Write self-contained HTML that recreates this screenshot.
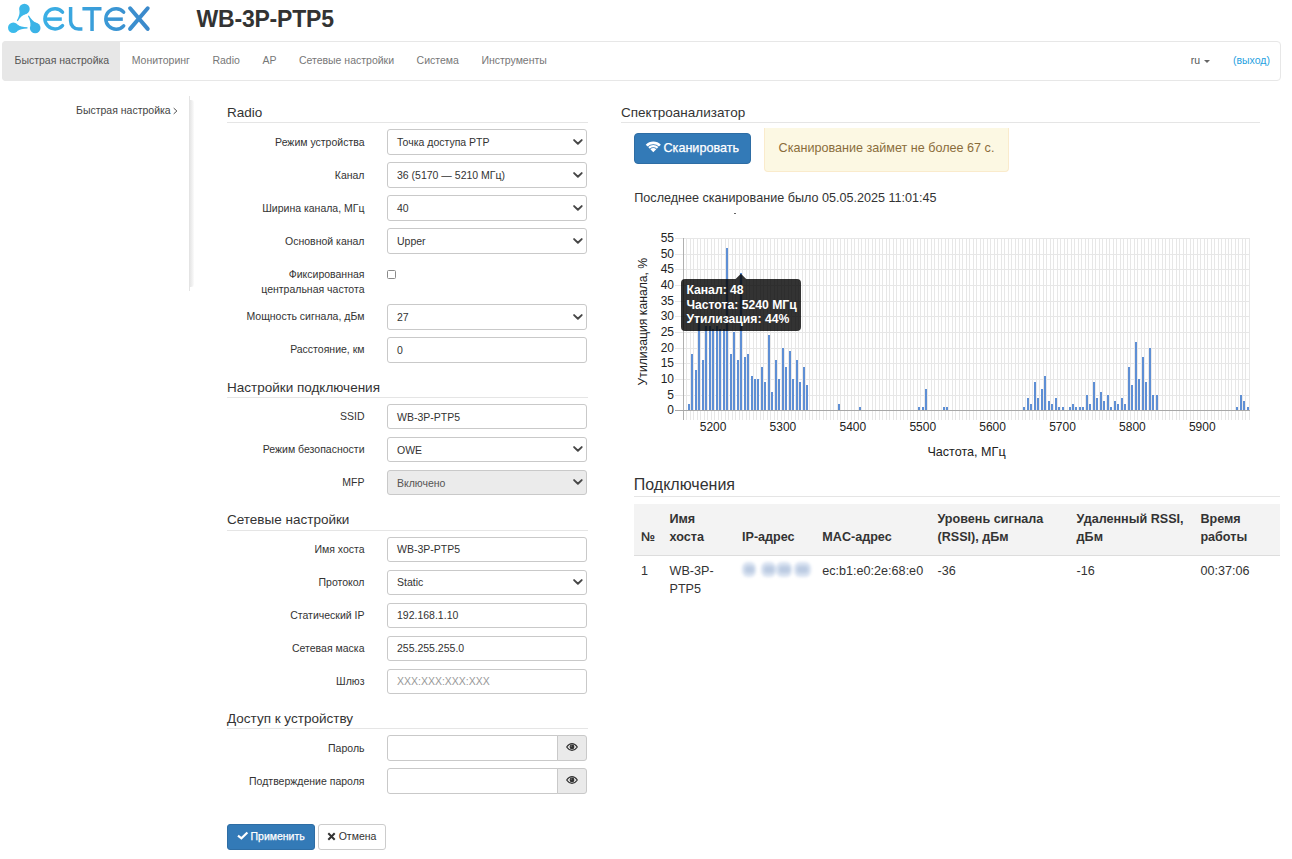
<!DOCTYPE html>
<html><head><meta charset="utf-8"><title>WB-3P-PTP5</title>
<style>
html,body{margin:0;padding:0;background:#fff;width:1292px;height:859px;overflow:hidden}
body{position:relative;font-family:"Liberation Sans",sans-serif;color:#333}
.abs{position:absolute}
.t{position:absolute;white-space:nowrap}
svg text{font-family:"Liberation Sans",sans-serif}
</style></head><body>
<svg class="abs" style="left:0;top:0" width="160" height="40" viewBox="0 0 160 40">
<defs><linearGradient id="lg" x1="8" y1="0" x2="150" y2="0" gradientUnits="userSpaceOnUse">
<stop offset="0" stop-color="#3cbcec"/><stop offset="0.45" stop-color="#3aa6df"/><stop offset="1" stop-color="#3b88ca"/></linearGradient></defs>
<g fill="url(#lg)">
<circle cx="24.4" cy="9.1" r="5.3"/><circle cx="13.3" cy="27.7" r="5.3"/><circle cx="35.2" cy="27.9" r="5.3"/>
<path d="M19.45 11.00Q20.07 14.84 16.83 20.62L17.77 21.18Q21.35 15.62 25.04 14.36Z"/>
<path d="M17.43 31.02Q20.44 28.55 27.49 28.45L27.51 27.35Q20.46 27.05 17.52 24.50Z"/>
<path d="M36.00 22.66Q32.35 21.30 28.88 15.53L27.92 16.07Q31.04 22.03 30.31 25.86Z"/>
</g>
<g fill="none" stroke="url(#lg)" stroke-width="3.5">
<path d="M45 19.1H61.8"/>
<path d="M70.6 7V21 A8 8 0 0 0 78.6 29.1H82.4"/>
<path d="M82.4 8.65H101.5M92.05 7V30.9"/>
<path d="M106.2 19.15H122.8"/>
</g>
<g fill="none" stroke="url(#lg)" stroke-width="3.5" stroke-linecap="round">
<path d="M62.5 12.09 A10.1 10.1 0 1 0 62.5 25.61"/>
<path d="M123.67 12.09 A10.25 10.25 0 1 0 123.67 25.81"/>
</g>
<g fill="none" stroke="url(#lg)" stroke-width="4" stroke-linecap="round">
<path d="M130.1 8.3L147.7 28.9M147.7 8.3L130.1 28.9"/>
</g>
</svg>
<div class="t" style="top:6px;font-size:23px;line-height:26px;color:#333;font-weight:bold;left:196.5px;letter-spacing:-0.2px">WB-3P-PTP5</div>
<div class="abs" style="left:2px;top:41px;width:1277px;height:38px;border:1px solid #e7e7e7;border-radius:4px;background:#fff"></div>
<div class="abs" style="left:2px;top:41px;width:118px;height:40px;background:#e7e7e7;border-radius:4px 0 0 4px"></div>
<div class="t" style="top:54px;font-size:10.5px;line-height:12px;color:#555;left:14.5px;">Быстрая настройка</div>
<div class="t" style="top:54px;font-size:10.5px;line-height:12px;color:#777;left:131.72px;">Мониторинг</div>
<div class="t" style="top:54px;font-size:10.5px;line-height:12px;color:#777;left:212.45px;">Radio</div>
<div class="t" style="top:54px;font-size:10.5px;line-height:12px;color:#777;left:262.39px;">AP</div>
<div class="t" style="top:54px;font-size:10.5px;line-height:12px;color:#777;left:298.89px;">Сетевые настройки</div>
<div class="t" style="top:54px;font-size:10.5px;line-height:12px;color:#777;left:416.59px;">Система</div>
<div class="t" style="top:54px;font-size:10.5px;line-height:12px;color:#777;left:481.38px;">Инструменты</div>
<div class="t" style="top:54px;font-size:10.5px;line-height:12px;color:#555;left:1190.7px;">ru</div>
<div class="abs" style="left:1203.8px;top:59.8px;width:0;height:0;border-left:3px solid transparent;border-right:3px solid transparent;border-top:3px solid #666"></div>
<div class="t" style="top:54px;font-size:10.5px;line-height:12px;color:#1fa2df;left:1232.9px;">(выход)</div>
<div class="t" style="top:104px;font-size:10.5px;line-height:12px;color:#444;left:76px;">Быстрая настройка</div>
<svg class="abs" style="left:172px;top:106px" width="8" height="10"><path d="M1.7 2.1L4.9 5L1.7 7.9" fill="none" stroke="#4a4a4a" stroke-width="0.95"/></svg>
<div class="abs" style="left:189px;top:96px;width:1px;height:195px;background:#e4e4e4"></div>
<div class="abs" style="left:190px;top:100px;width:4px;height:187px;border-radius:0 3px 3px 0;background:linear-gradient(90deg,#e6e6e6,#efefef 45%,#fbfbfb)"></div>
<div class="t" style="top:105px;font-size:13.5px;line-height:15px;color:#333;left:227px;">Radio</div>
<div class="abs" style="left:227px;top:122px;width:361px;height:1px;background:#e5e5e5"></div>
<div class="t" style="top:136px;font-size:10.5px;line-height:12px;color:#333;right:927.5px;text-align:right;">Режим устройства</div>
<div class="abs" style="left:387px;top:129px;width:198px;height:24px;border:1px solid #c9c9c9;border-radius:3px;background:#fff"></div>
<div class="t" style="top:136px;font-size:10.5px;line-height:12px;color:#333;left:397px;">Точка доступа PTP</div>
<svg class="abs" style="left:572px;top:138.5px" width="12" height="8"><path d="M2.1 1.1L5.9 4.8L9.7 1.1" fill="none" stroke="#474747" stroke-width="1.9" stroke-linecap="round" stroke-linejoin="round"/></svg>
<div class="t" style="top:169px;font-size:10.5px;line-height:12px;color:#333;right:927.5px;text-align:right;">Канал</div>
<div class="abs" style="left:387px;top:162px;width:198px;height:24px;border:1px solid #c9c9c9;border-radius:3px;background:#fff"></div>
<div class="t" style="top:169px;font-size:10.5px;line-height:12px;color:#333;left:397px;">36 (5170 — 5210 МГц)</div>
<svg class="abs" style="left:572px;top:171.5px" width="12" height="8"><path d="M2.1 1.1L5.9 4.8L9.7 1.1" fill="none" stroke="#474747" stroke-width="1.9" stroke-linecap="round" stroke-linejoin="round"/></svg>
<div class="t" style="top:202px;font-size:10.5px;line-height:12px;color:#333;right:927.5px;text-align:right;">Ширина канала, МГц</div>
<div class="abs" style="left:387px;top:195px;width:198px;height:24px;border:1px solid #c9c9c9;border-radius:3px;background:#fff"></div>
<div class="t" style="top:202px;font-size:10.5px;line-height:12px;color:#333;left:397px;">40</div>
<svg class="abs" style="left:572px;top:204.5px" width="12" height="8"><path d="M2.1 1.1L5.9 4.8L9.7 1.1" fill="none" stroke="#474747" stroke-width="1.9" stroke-linecap="round" stroke-linejoin="round"/></svg>
<div class="t" style="top:235px;font-size:10.5px;line-height:12px;color:#333;right:927.5px;text-align:right;">Основной канал</div>
<div class="abs" style="left:387px;top:228px;width:198px;height:24px;border:1px solid #c9c9c9;border-radius:3px;background:#fff"></div>
<div class="t" style="top:235px;font-size:10.5px;line-height:12px;color:#333;left:397px;">Upper</div>
<svg class="abs" style="left:572px;top:237.5px" width="12" height="8"><path d="M2.1 1.1L5.9 4.8L9.7 1.1" fill="none" stroke="#474747" stroke-width="1.9" stroke-linecap="round" stroke-linejoin="round"/></svg>
<div class="t" style="top:268px;font-size:10.5px;line-height:12px;color:#333;right:927.5px;text-align:right;">Фиксированная</div>
<div class="t" style="top:283px;font-size:10.5px;line-height:12px;color:#333;right:927.5px;text-align:right;">центральная частота</div>
<div class="abs" style="left:387px;top:270px;width:7px;height:7px;border:1px solid #8a8a8a;border-radius:1.5px;background:#fff"></div>
<div class="t" style="top:310px;font-size:10.5px;line-height:12px;color:#333;right:927.5px;text-align:right;">Мощность сигнала, дБм</div>
<div class="abs" style="left:387px;top:304px;width:198px;height:24px;border:1px solid #c9c9c9;border-radius:3px;background:#fff"></div>
<div class="t" style="top:311px;font-size:10.5px;line-height:12px;color:#333;left:397px;">27</div>
<svg class="abs" style="left:572px;top:313.5px" width="12" height="8"><path d="M2.1 1.1L5.9 4.8L9.7 1.1" fill="none" stroke="#474747" stroke-width="1.9" stroke-linecap="round" stroke-linejoin="round"/></svg>
<div class="t" style="top:343px;font-size:10.5px;line-height:12px;color:#333;right:927.5px;text-align:right;">Расстояние, км</div>
<div class="abs" style="left:387px;top:337px;width:198px;height:24px;border:1px solid #c9c9c9;border-radius:3px;background:#fff"></div>
<div class="t" style="top:344px;font-size:10.5px;line-height:12px;color:#333;left:397px;">0</div>
<div class="t" style="top:380px;font-size:13.5px;line-height:15px;color:#333;left:227px;">Настройки подключения</div>
<div class="abs" style="left:227px;top:397px;width:361px;height:1px;background:#e5e5e5"></div>
<div class="t" style="top:410px;font-size:10.5px;line-height:12px;color:#333;right:927.5px;text-align:right;">SSID</div>
<div class="abs" style="left:387px;top:404px;width:198px;height:23px;border:1px solid #c9c9c9;border-radius:3px;background:#fff"></div>
<div class="t" style="top:411px;font-size:10.5px;line-height:12px;color:#333;left:397px;">WB-3P-PTP5</div>
<div class="t" style="top:443px;font-size:10.5px;line-height:12px;color:#333;right:927.5px;text-align:right;">Режим безопасности</div>
<div class="abs" style="left:387px;top:437px;width:198px;height:23px;border:1px solid #c9c9c9;border-radius:3px;background:#fff"></div>
<div class="t" style="top:444px;font-size:10.5px;line-height:12px;color:#333;left:397px;">OWE</div>
<svg class="abs" style="left:572px;top:446.0px" width="12" height="8"><path d="M2.1 1.1L5.9 4.8L9.7 1.1" fill="none" stroke="#474747" stroke-width="1.9" stroke-linecap="round" stroke-linejoin="round"/></svg>
<div class="t" style="top:476px;font-size:10.5px;line-height:12px;color:#333;right:927.5px;text-align:right;">MFP</div>
<div class="abs" style="left:387px;top:470px;width:198px;height:23px;border:1px solid #c9c9c9;border-radius:3px;background:#ebebeb"></div>
<div class="t" style="top:477px;font-size:10.5px;line-height:12px;color:#555;left:397px;">Включено</div>
<svg class="abs" style="left:572px;top:479.0px" width="12" height="8"><path d="M2.1 1.1L5.9 4.8L9.7 1.1" fill="none" stroke="#474747" stroke-width="1.9" stroke-linecap="round" stroke-linejoin="round"/></svg>
<div class="t" style="top:512px;font-size:13.5px;line-height:15px;color:#333;left:227px;">Сетевые настройки</div>
<div class="abs" style="left:227px;top:530px;width:361px;height:1px;background:#e5e5e5"></div>
<div class="t" style="top:543px;font-size:10.5px;line-height:12px;color:#333;right:927.5px;text-align:right;">Имя хоста</div>
<div class="abs" style="left:387px;top:537px;width:198px;height:23px;border:1px solid #c9c9c9;border-radius:3px;background:#fff"></div>
<div class="t" style="top:543px;font-size:10.5px;line-height:12px;color:#333;left:397px;">WB-3P-PTP5</div>
<div class="t" style="top:576px;font-size:10.5px;line-height:12px;color:#333;right:927.5px;text-align:right;">Протокол</div>
<div class="abs" style="left:387px;top:570px;width:198px;height:23px;border:1px solid #c9c9c9;border-radius:3px;background:#fff"></div>
<div class="t" style="top:576px;font-size:10.5px;line-height:12px;color:#333;left:397px;">Static</div>
<svg class="abs" style="left:572px;top:579.0px" width="12" height="8"><path d="M2.1 1.1L5.9 4.8L9.7 1.1" fill="none" stroke="#474747" stroke-width="1.9" stroke-linecap="round" stroke-linejoin="round"/></svg>
<div class="t" style="top:609px;font-size:10.5px;line-height:12px;color:#333;right:927.5px;text-align:right;">Статический IP</div>
<div class="abs" style="left:387px;top:603px;width:198px;height:23px;border:1px solid #c9c9c9;border-radius:3px;background:#fff"></div>
<div class="t" style="top:609px;font-size:10.5px;line-height:12px;color:#333;left:397px;">192.168.1.10</div>
<div class="t" style="top:642px;font-size:10.5px;line-height:12px;color:#333;right:927.5px;text-align:right;">Сетевая маска</div>
<div class="abs" style="left:387px;top:636px;width:198px;height:23px;border:1px solid #c9c9c9;border-radius:3px;background:#fff"></div>
<div class="t" style="top:642px;font-size:10.5px;line-height:12px;color:#333;left:397px;">255.255.255.0</div>
<div class="t" style="top:675px;font-size:10.5px;line-height:12px;color:#333;right:927.5px;text-align:right;">Шлюз</div>
<div class="abs" style="left:387px;top:669px;width:198px;height:23px;border:1px solid #c9c9c9;border-radius:3px;background:#fff"></div>
<div class="t" style="top:675px;font-size:10.5px;line-height:12px;color:#999;left:397px;">XXX:XXX:XXX:XXX</div>
<div class="t" style="top:711px;font-size:13.5px;line-height:15px;color:#333;left:227px;">Доступ к устройству</div>
<div class="abs" style="left:227px;top:728px;width:361px;height:1px;background:#e5e5e5"></div>
<div class="t" style="top:742px;font-size:10.5px;line-height:12px;color:#333;right:927.5px;text-align:right;">Пароль</div>
<div class="abs" style="left:387px;top:735px;width:169px;height:24px;border:1px solid #c9c9c9;border-radius:3px 0 0 3px;background:#fff"></div>
<div class="abs" style="left:557px;top:735px;width:28px;height:24px;border:1px solid #c9c9c9;border-radius:0 3px 3px 0;background:#eaeaea"></div>
<svg class="abs" style="left:566px;top:743.2px" width="12" height="8" viewBox="0 0 12 8"><path d="M0.7 4C2.4 1.5 4.1 0.7 6 0.7S9.6 1.5 11.3 4C9.6 6.5 7.9 7.3 6 7.3S2.4 6.5 0.7 4Z" fill="none" stroke="#333" stroke-width="1.2"/><circle cx="6" cy="3.9" r="2.4" fill="#333"/><circle cx="5.2" cy="3.1" r="0.7" fill="#888"/></svg>
<div class="t" style="top:775px;font-size:10.5px;line-height:12px;color:#333;right:927.5px;text-align:right;">Подтверждение пароля</div>
<div class="abs" style="left:387px;top:768px;width:169px;height:24px;border:1px solid #c9c9c9;border-radius:3px 0 0 3px;background:#fff"></div>
<div class="abs" style="left:557px;top:768px;width:28px;height:24px;border:1px solid #c9c9c9;border-radius:0 3px 3px 0;background:#eaeaea"></div>
<svg class="abs" style="left:566px;top:776.2px" width="12" height="8" viewBox="0 0 12 8"><path d="M0.7 4C2.4 1.5 4.1 0.7 6 0.7S9.6 1.5 11.3 4C9.6 6.5 7.9 7.3 6 7.3S2.4 6.5 0.7 4Z" fill="none" stroke="#333" stroke-width="1.2"/><circle cx="6" cy="3.9" r="2.4" fill="#333"/><circle cx="5.2" cy="3.1" r="0.7" fill="#888"/></svg>
<div class="abs" style="left:227px;top:824px;width:86px;height:24px;border:1px solid #2e6da4;border-radius:3px;background:#337ab7"></div>
<svg class="abs" style="left:237px;top:831px" width="12" height="10" viewBox="0 0 12 10"><path d="M1 4.6L4.4 7.3L10.4 1.5" fill="none" stroke="#fff" stroke-width="2.2"/></svg>
<div class="t" style="top:830px;font-size:10.5px;line-height:12px;color:#fff;left:250.5px;-webkit-text-stroke:0.25px #fff">Применить</div>
<div class="abs" style="left:318px;top:824px;width:66px;height:24px;border:1px solid #ccc;border-radius:3px;background:#fff"></div>
<svg class="abs" style="left:327px;top:832px" width="9" height="9" viewBox="0 0 9 9"><path d="M1.3 1.3L7.7 7.7M7.7 1.3L1.3 7.7" fill="none" stroke="#333" stroke-width="2"/></svg>
<div class="t" style="top:830px;font-size:10.5px;line-height:12px;color:#333;left:338.7px;">Отмена</div>
<div class="t" style="top:105px;font-size:13.5px;line-height:15px;color:#333;left:621px;">Спектроанализатор</div>
<div class="abs" style="left:621px;top:122px;width:639px;height:1px;background:#e5e5e5"></div>
<div class="abs" style="left:634px;top:133px;width:115px;height:29px;border:1px solid #2e6da4;border-radius:4px;background:#337ab7"></div>
<svg class="abs" style="left:644px;top:139px" width="19" height="15" viewBox="0 0 19 15"><path d="M1.73 5.63A10.7 10.7 0 0 1 16.87 5.63L14.96 7.54A8.0 8.0 0 0 0 3.64 7.54ZM4.21 8.11A7.2 7.2 0 0 1 14.39 8.11L12.84 9.66A5.0 5.0 0 0 0 5.76 9.66ZM6.33 10.23A4.2 4.2 0 0 1 12.27 10.23L9.30 13.20Z" fill="#fff"/></svg>
<div class="t" style="top:141px;font-size:12.6px;line-height:14px;color:#fff;left:663.5px;-webkit-text-stroke:0.25px #fff">Сканировать</div>
<div class="abs" style="left:764px;top:128px;width:243px;height:43px;border:1px solid #faebcc;border-top:none;border-radius:0 0 4px 4px;background:#fcf8e3"></div>
<div class="t" style="top:141px;font-size:12.6px;line-height:14px;color:#8a6d3b;left:778.6px;">Сканирование займет не более 67 с.</div>
<div class="t" style="top:191px;font-size:12.6px;line-height:14px;color:#333;left:634.3px;">Последнее сканирование было 05.05.2025 11:01:45</div>
<div class="abs" style="left:734px;top:213px;width:2px;height:1px;background:#666"></div>
<svg width="660" height="250" viewBox="620 220 660 250" style="position:absolute;left:620px;top:220px">
<path d="M686 238h1V420h-1ZM690 238h1V420h-1ZM693 238h1V420h-1ZM697 238h1V420h-1ZM700 238h1V420h-1ZM704 238h1V420h-1ZM707 238h1V420h-1ZM711 238h1V420h-1ZM714 238h1V420h-1ZM718 238h1V420h-1ZM721 238h1V420h-1ZM725 238h1V420h-1ZM728 238h1V420h-1ZM732 238h1V420h-1ZM735 238h1V420h-1ZM739 238h1V420h-1ZM742 238h1V420h-1ZM746 238h1V420h-1ZM749 238h1V420h-1ZM753 238h1V420h-1ZM756 238h1V420h-1ZM760 238h1V420h-1ZM763 238h1V420h-1ZM767 238h1V420h-1ZM770 238h1V420h-1ZM774 238h1V420h-1ZM777 238h1V420h-1ZM781 238h1V420h-1ZM784 238h1V420h-1ZM788 238h1V420h-1ZM791 238h1V420h-1ZM795 238h1V420h-1ZM798 238h1V420h-1ZM802 238h1V420h-1ZM805 238h1V420h-1ZM809 238h1V420h-1ZM812 238h1V420h-1ZM816 238h1V420h-1ZM819 238h1V420h-1ZM823 238h1V420h-1ZM826 238h1V420h-1ZM830 238h1V420h-1ZM833 238h1V420h-1ZM837 238h1V420h-1ZM840 238h1V420h-1ZM844 238h1V420h-1ZM847 238h1V420h-1ZM851 238h1V420h-1ZM854 238h1V420h-1ZM858 238h1V420h-1ZM861 238h1V420h-1ZM865 238h1V420h-1ZM868 238h1V420h-1ZM872 238h1V420h-1ZM875 238h1V420h-1ZM879 238h1V420h-1ZM882 238h1V420h-1ZM886 238h1V420h-1ZM889 238h1V420h-1ZM893 238h1V420h-1ZM896 238h1V420h-1ZM900 238h1V420h-1ZM903 238h1V420h-1ZM907 238h1V420h-1ZM910 238h1V420h-1ZM913 238h1V420h-1ZM917 238h1V420h-1ZM920 238h1V420h-1ZM924 238h1V420h-1ZM927 238h1V420h-1ZM931 238h1V420h-1ZM934 238h1V420h-1ZM938 238h1V420h-1ZM941 238h1V420h-1ZM945 238h1V420h-1ZM948 238h1V420h-1ZM952 238h1V420h-1ZM955 238h1V420h-1ZM959 238h1V420h-1ZM962 238h1V420h-1ZM966 238h1V420h-1ZM969 238h1V420h-1ZM973 238h1V420h-1ZM976 238h1V420h-1ZM980 238h1V420h-1ZM983 238h1V420h-1ZM987 238h1V420h-1ZM990 238h1V420h-1ZM994 238h1V420h-1ZM997 238h1V420h-1ZM1001 238h1V420h-1ZM1004 238h1V420h-1ZM1008 238h1V420h-1ZM1011 238h1V420h-1ZM1015 238h1V420h-1ZM1018 238h1V420h-1ZM1022 238h1V420h-1ZM1025 238h1V420h-1ZM1029 238h1V420h-1ZM1032 238h1V420h-1ZM1036 238h1V420h-1ZM1039 238h1V420h-1ZM1043 238h1V420h-1ZM1046 238h1V420h-1ZM1050 238h1V420h-1ZM1053 238h1V420h-1ZM1057 238h1V420h-1ZM1060 238h1V420h-1ZM1064 238h1V420h-1ZM1067 238h1V420h-1ZM1071 238h1V420h-1ZM1074 238h1V420h-1ZM1078 238h1V420h-1ZM1081 238h1V420h-1ZM1085 238h1V420h-1ZM1088 238h1V420h-1ZM1092 238h1V420h-1ZM1095 238h1V420h-1ZM1099 238h1V420h-1ZM1102 238h1V420h-1ZM1106 238h1V420h-1ZM1109 238h1V420h-1ZM1113 238h1V420h-1ZM1116 238h1V420h-1ZM1120 238h1V420h-1ZM1123 238h1V420h-1ZM1127 238h1V420h-1ZM1130 238h1V420h-1ZM1134 238h1V420h-1ZM1137 238h1V420h-1ZM1141 238h1V420h-1ZM1144 238h1V420h-1ZM1148 238h1V420h-1ZM1151 238h1V420h-1ZM1155 238h1V420h-1ZM1158 238h1V420h-1ZM1162 238h1V420h-1ZM1165 238h1V420h-1ZM1169 238h1V420h-1ZM1172 238h1V420h-1ZM1176 238h1V420h-1ZM1179 238h1V420h-1ZM1183 238h1V420h-1ZM1186 238h1V420h-1ZM1190 238h1V420h-1ZM1193 238h1V420h-1ZM1197 238h1V420h-1ZM1200 238h1V420h-1ZM1204 238h1V420h-1ZM1207 238h1V420h-1ZM1211 238h1V420h-1ZM1214 238h1V420h-1ZM1218 238h1V420h-1ZM1221 238h1V420h-1ZM1225 238h1V420h-1ZM1228 238h1V420h-1ZM1231 238h1V420h-1ZM1235 238h1V420h-1ZM1238 238h1V420h-1ZM1242 238h1V420h-1ZM1245 238h1V420h-1ZM1249 238h1V420h-1Z" fill="#e7e7e7" shape-rendering="crispEdges"/>
<path d="M675 395H1250v1H675ZM675 379H1250v1H675ZM675 363H1250v1H675ZM675 348H1250v1H675ZM675 332H1250v1H675ZM675 316H1250v1H675ZM675 301H1250v1H675ZM675 285H1250v1H675ZM675 269H1250v1H675ZM675 254H1250v1H675ZM675 238H1250v1H675Z" fill="#e7e7e7" shape-rendering="crispEdges"/>
<path d="M683 238h1V420h-1Z" fill="#b0b0b0" shape-rendering="crispEdges"/>
<path d="M688 404h2V410h-2ZM691 354h2V410h-2ZM695 370h2V410h-2ZM698 317h2V410h-2ZM702 360h2V410h-2ZM705 326h2V410h-2ZM709 326h2V410h-2ZM712 329h2V410h-2ZM716 326h2V410h-2ZM719 329h2V410h-2ZM723 329h2V410h-2ZM726 248h2V410h-2ZM730 354h2V410h-2ZM733 332h2V410h-2ZM737 360h2V410h-2ZM740 273h2V410h-2ZM744 357h2V410h-2ZM747 354h2V410h-2ZM751 376h2V410h-2ZM754 379h2V410h-2ZM757 379h2V410h-2ZM761 367h2V410h-2ZM764 382h2V410h-2ZM768 335h2V410h-2ZM771 392h2V410h-2ZM775 360h2V410h-2ZM778 379h2V410h-2ZM782 348h2V410h-2ZM785 367h2V410h-2ZM789 351h2V410h-2ZM792 379h2V410h-2ZM796 360h2V410h-2ZM799 382h2V410h-2ZM803 367h2V410h-2ZM806 385h2V410h-2ZM838 404h2V410h-2ZM859 407h2V410h-2ZM918 407h2V410h-2ZM922 407h2V410h-2ZM925 389h2V410h-2ZM943 407h2V410h-2ZM946 407h2V410h-2ZM1023 407h2V410h-2ZM1027 398h2V410h-2ZM1030 404h2V410h-2ZM1034 382h2V410h-2ZM1037 398h2V410h-2ZM1041 389h2V410h-2ZM1044 376h2V410h-2ZM1048 401h2V410h-2ZM1051 404h2V410h-2ZM1055 398h2V410h-2ZM1058 407h2V410h-2ZM1062 407h2V410h-2ZM1069 407h2V410h-2ZM1072 404h2V410h-2ZM1075 407h2V410h-2ZM1079 407h2V410h-2ZM1082 407h2V410h-2ZM1086 395h2V410h-2ZM1089 404h2V410h-2ZM1093 382h2V410h-2ZM1096 398h2V410h-2ZM1100 392h2V410h-2ZM1103 401h2V410h-2ZM1107 395h2V410h-2ZM1110 407h2V410h-2ZM1114 401h2V410h-2ZM1117 404h2V410h-2ZM1121 398h2V410h-2ZM1124 404h2V410h-2ZM1128 367h2V410h-2ZM1131 385h2V410h-2ZM1135 342h2V410h-2ZM1138 379h2V410h-2ZM1142 357h2V410h-2ZM1145 382h2V410h-2ZM1149 348h2V410h-2ZM1152 395h2V410h-2ZM1156 395h2V410h-2ZM1236 407h2V410h-2ZM1240 395h2V410h-2ZM1243 401h2V410h-2ZM1247 407h2V410h-2Z" fill="#5e8fd5" shape-rendering="crispEdges"/>
<path d="M675 410H1250v1H675Z" fill="#a8a8a8" shape-rendering="crispEdges"/>
<text transform="translate(674 414.00) scale(1 1.1)" text-anchor="end" font-size="12" fill="#222">0</text>
<text transform="translate(674 399.00) scale(1 1.1)" text-anchor="end" font-size="12" fill="#222">5</text>
<text transform="translate(674 383.00) scale(1 1.1)" text-anchor="end" font-size="12" fill="#222">10</text>
<text transform="translate(674 367.00) scale(1 1.1)" text-anchor="end" font-size="12" fill="#222">15</text>
<text transform="translate(674 352.00) scale(1 1.1)" text-anchor="end" font-size="12" fill="#222">20</text>
<text transform="translate(674 336.00) scale(1 1.1)" text-anchor="end" font-size="12" fill="#222">25</text>
<text transform="translate(674 320.00) scale(1 1.1)" text-anchor="end" font-size="12" fill="#222">30</text>
<text transform="translate(674 305.00) scale(1 1.1)" text-anchor="end" font-size="12" fill="#222">35</text>
<text transform="translate(674 289.00) scale(1 1.1)" text-anchor="end" font-size="12" fill="#222">40</text>
<text transform="translate(674 273.00) scale(1 1.1)" text-anchor="end" font-size="12" fill="#222">45</text>
<text transform="translate(674 258.00) scale(1 1.1)" text-anchor="end" font-size="12" fill="#222">50</text>
<text transform="translate(674 242.00) scale(1 1.1)" text-anchor="end" font-size="12" fill="#222">55</text>
<text transform="translate(713.06 431) scale(1 1.1)" text-anchor="middle" font-size="12" fill="#222">5200</text>
<text transform="translate(782.95 431) scale(1 1.1)" text-anchor="middle" font-size="12" fill="#222">5300</text>
<text transform="translate(852.84 431) scale(1 1.1)" text-anchor="middle" font-size="12" fill="#222">5400</text>
<text transform="translate(922.73 431) scale(1 1.1)" text-anchor="middle" font-size="12" fill="#222">5500</text>
<text transform="translate(992.62 431) scale(1 1.1)" text-anchor="middle" font-size="12" fill="#222">5600</text>
<text transform="translate(1062.51 431) scale(1 1.1)" text-anchor="middle" font-size="12" fill="#222">5700</text>
<text transform="translate(1132.40 431) scale(1 1.1)" text-anchor="middle" font-size="12" fill="#222">5800</text>
<text transform="translate(1202.29 431) scale(1 1.1)" text-anchor="middle" font-size="12" fill="#222">5900</text>
<text x="966.5" y="455.9" text-anchor="middle" font-size="12.6" fill="#222">Частота, МГц</text>
<text transform="translate(647.3 321.6) rotate(-90)" x="0" y="0" text-anchor="middle" font-size="12.2" fill="#222">Утилизация канала, %</text>
</svg>
<svg class="abs" style="left:680px;top:272px" width="122" height="60"><path d="M5 7H55.6L60.9 1.7L66.2 7H117A4 4 0 0 1 121 11V55A4 4 0 0 1 117 59H5A4 4 0 0 1 1 55V11A4 4 0 0 1 5 7Z" fill="rgba(0,0,0,0.8)"/></svg>
<div class="t" style="top:283px;font-size:12.2px;line-height:14px;color:#fff;font-weight:bold;left:686.4px;">Канал: 48</div>
<div class="t" style="top:298px;font-size:12.2px;line-height:14px;color:#fff;font-weight:bold;left:686.4px;">Частота: 5240 МГц</div>
<div class="t" style="top:312px;font-size:12.2px;line-height:14px;color:#fff;font-weight:bold;left:686.4px;">Утилизация: 44%</div>
<div class="t" style="top:476px;font-size:16px;line-height:17px;color:#333;left:633.8px;">Подключения</div>
<div class="abs" style="left:634px;top:496px;width:646px;height:1px;background:#e5e5e5"></div>
<div class="abs" style="left:634px;top:504px;width:646px;height:51px;background:#f3f3f3;border-bottom:1px solid #ddd"></div>
<div class="t" style="top:530px;font-size:12.6px;line-height:14px;color:#333;font-weight:bold;left:641px;">№</div>
<div class="t" style="top:512px;font-size:12.6px;line-height:14px;color:#333;font-weight:bold;left:669.5px;">Имя</div>
<div class="t" style="top:530px;font-size:12.6px;line-height:14px;color:#333;font-weight:bold;left:669.5px;">хоста</div>
<div class="t" style="top:530px;font-size:12.6px;line-height:14px;color:#333;font-weight:bold;left:742px;">IP-адрес</div>
<div class="t" style="top:530px;font-size:12.6px;line-height:14px;color:#333;font-weight:bold;left:822.3px;">MAC-адрес</div>
<div class="t" style="top:512px;font-size:12.6px;line-height:14px;color:#333;font-weight:bold;left:937.5px;">Уровень сигнала</div>
<div class="t" style="top:530px;font-size:12.6px;line-height:14px;color:#333;font-weight:bold;left:937.5px;">(RSSI), дБм</div>
<div class="t" style="top:512px;font-size:12.6px;line-height:14px;color:#333;font-weight:bold;left:1076.6px;">Удаленный RSSI,</div>
<div class="t" style="top:530px;font-size:12.6px;line-height:14px;color:#333;font-weight:bold;left:1076.6px;">дБм</div>
<div class="t" style="top:512px;font-size:12.6px;line-height:14px;color:#333;font-weight:bold;left:1200.4px;">Время</div>
<div class="t" style="top:530px;font-size:12.6px;line-height:14px;color:#333;font-weight:bold;left:1200.4px;">работы</div>
<div class="t" style="top:564px;font-size:12.6px;line-height:14px;color:#333;left:641px;">1</div>
<div class="t" style="top:564px;font-size:12.6px;line-height:14px;color:#333;left:669.5px;">WB-3P-</div>
<div class="t" style="top:582px;font-size:12.6px;line-height:14px;color:#333;left:669.5px;">PTP5</div>
<div class="t" style="top:564px;font-size:12.6px;line-height:14px;color:#333;left:822.3px;">ec:b1:e0:2e:68:e0</div>
<div class="t" style="top:564px;font-size:12.6px;line-height:14px;color:#333;left:937.5px;">-36</div>
<div class="t" style="top:564px;font-size:12.6px;line-height:14px;color:#333;left:1076.6px;">-16</div>
<div class="t" style="top:564px;font-size:12.6px;line-height:14px;color:#333;left:1200.4px;">00:37:06</div>
<div class="abs" style="left:736px;top:556px;width:80px;height:28px;filter:blur(1.6px)"><svg width="80" height="28"><g fill="#d7e1f0"><rect x="6" y="6" width="14" height="15" rx="6"/><rect x="25" y="6" width="15" height="15" rx="6"/><rect x="40" y="6" width="16" height="15" rx="6"/><rect x="58" y="6" width="17" height="15" rx="6"/></g><g fill="#bccbe2"><rect x="9" y="10" width="9" height="7" rx="3"/><rect x="28" y="10" width="10" height="7" rx="3"/><rect x="43" y="10" width="11" height="7" rx="3"/><rect x="61" y="10" width="11" height="7" rx="3"/></g></svg></div>
</body></html>
